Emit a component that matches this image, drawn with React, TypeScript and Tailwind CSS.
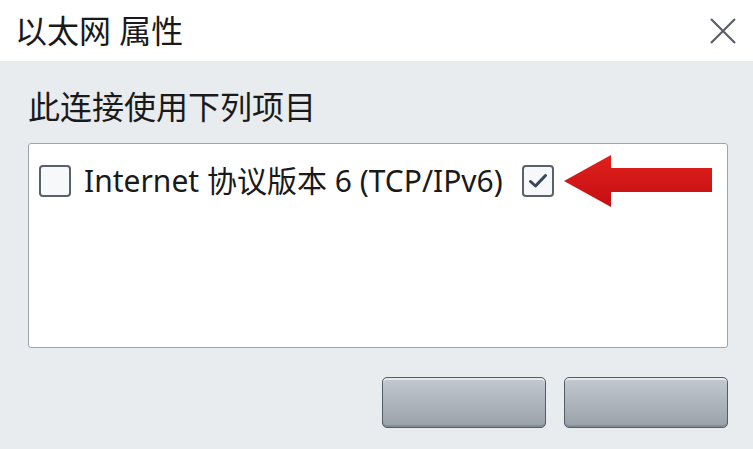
import React from "react";

const font = { fontFamily: '"Noto Sans", "Noto Sans CJK SC", sans-serif' };

const Box = ({ checked }: { checked?: boolean }) => (
  <span className="flex h-[32px] w-[32px] shrink-0 items-center justify-center rounded-[4px] border-2 border-[#58616c] bg-[#f7f8f9]">
    {checked && (
      <svg width="22" height="22" viewBox="0 0 22 22">
        <path d="M3.5 11.5 L8.5 16 L18.5 5.5" fill="none" stroke="#38455a" strokeWidth="3" strokeLinecap="round" strokeLinejoin="round" />
      </svg>
    )}
  </span>
);

const Arrow = () => (
  <svg width="148" height="52" viewBox="0 0 148 52" className="shrink-0">
    <defs>
      <linearGradient id="ar" x1="0" y1="0" x2="0" y2="1">
        <stop offset="0" stopColor="#e0201c" />
        <stop offset="1" stopColor="#c40f12" />
      </linearGradient>
    </defs>
    <polygon points="0,26 47,0 47,13 148,13 148,37 47,37 47,52" fill="url(#ar)" />
  </svg>
);

const DialogButton = () => (
  <button className="h-[51px] w-[164px] rounded-[5px] border-[1.5px] border-[#545c64] bg-gradient-to-b from-[#c3c9cf] to-[#99a1aa] shadow-[inset_0_2px_0_rgba(255,255,255,0.6),inset_0_-2px_0_rgba(0,0,0,0.12)]" />
);

export default function App() {
  return (
    <div className="flex h-[449px] w-[753px] flex-col overflow-hidden bg-white text-[#1a1a1a]" style={font}>
      <div className="flex h-[61px] shrink-0 items-center justify-between pl-[15px] pr-[16px]">
        <span className="text-[32px] leading-none">以太网 属性</span>
        <svg width="28" height="28" viewBox="0 0 28 28">
          <path d="M2 2 L26 26 M26 2 L2 26" stroke="#5a5f66" strokeWidth="2.2" fill="none" />
        </svg>
      </div>
      <div className="flex flex-1 flex-col bg-[#e9ecee] pl-[28px] pr-[25px] pt-[26px]">
        <div className="text-[32px] leading-[40px]">此连接使用下列项目</div>
        <div className="mt-[16px] flex h-[205px] flex-col rounded-[3px] border-[1.5px] border-[#9ba4af] bg-white px-[10px] pt-[11px]">
          <div className="flex items-center">
            <Box />
            <span className="ml-[13px] whitespace-nowrap text-[30px] leading-[36px]">Internet 协议版本 6 (TCP/IPv6)</span>
            <span className="ml-[19px]"><Box checked /></span>
            <span className="ml-[10px] flex"><Arrow /></span>
          </div>
        </div>
        <div className="mt-[29px] flex justify-end gap-[18px]">
          <DialogButton />
          <DialogButton />
        </div>
      </div>
    </div>
  );
}
